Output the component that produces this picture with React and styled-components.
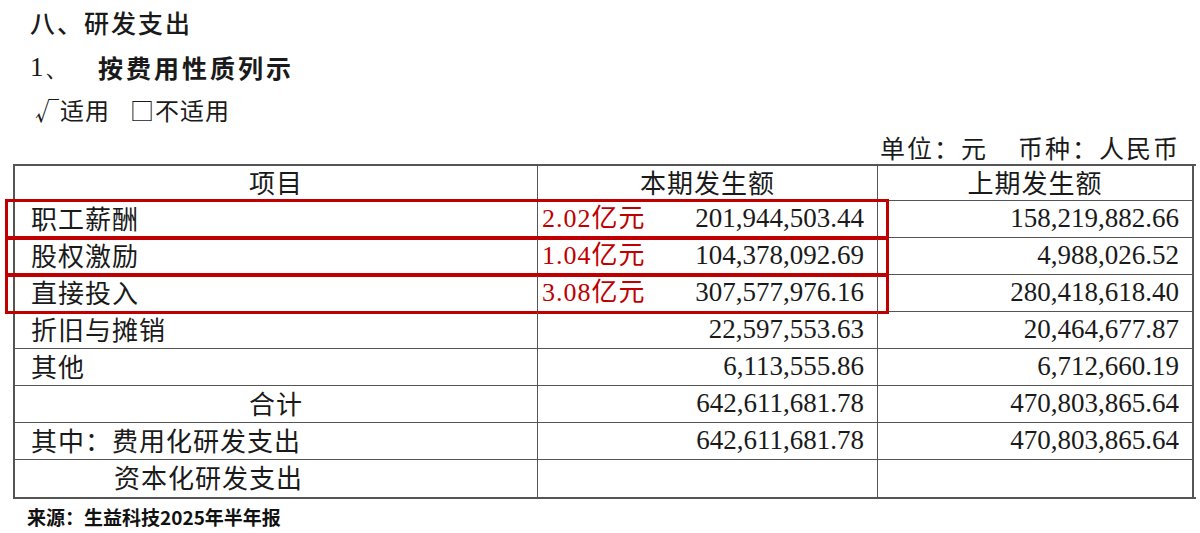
import styled, { createGlobalStyle } from "styled-components";

const GlobalStyle = createGlobalStyle`
  body {
    margin: 0;
    background: #fff;
    color: #1a1a1a;
    font-family: "Noto Sans CJK SC", sans-serif;
  }
`;

const Page = styled.main`
  width: 1200px;
  height: 533px;
  overflow: hidden;
  box-sizing: border-box;
  padding-left: 13px;
`;

const Title = styled.h2`
  margin: 0;
  height: 44px;
  line-height: 44px;
  padding-left: 17px;
  font-size: 25px;
  font-weight: 500;
  letter-spacing: 2px;
`;

const SubTitle = styled.h3`
  margin: 0;
  height: 46px;
  line-height: 46px;
  padding-left: 17px;
  font-size: 25px;
  font-weight: 600;
  letter-spacing: 3px;
  display: flex;
  .num {
    font-family: "Liberation Serif", serif;
    font-size: 27px;
    font-weight: 400;
    letter-spacing: 0;
    width: 68px;
  }
`;

const Applicable = styled.p`
  margin: 0;
  height: 40px;
  line-height: 40px;
  padding-left: 22px;
  font-size: 24px;
  display: flex;
  gap: 20px;
  span {
    letter-spacing: 1px;
  }
`;

const Unit = styled.p`
  margin: 0;
  height: 34px;
  line-height: 34px;
  padding-right: 20px;
  font-size: 25px;
  letter-spacing: 2px;
  display: flex;
  justify-content: flex-end;
  gap: 30px;
`;

const Table = styled.div`
  width: 1183px;
  border: 2px solid #555;
  border-right: none;
  box-sizing: border-box;
`;

const Row = styled.div`
  position: relative;
  display: grid;
  grid-template-columns: 523px 340px 316px;
  grid-template-rows: ${(p) => (p.$head ? "35px" : "37px")};

  ${(p) =>
    p.$mark &&
    `
    &::after {
      content: "";
      position: absolute;
      left: -10px;
      top: -2px;
      bottom: -2px;
      width: 884px;
      border: 3px solid #c00000;
      box-sizing: border-box;
      pointer-events: none;
    }
  `}
`;

const Cell = styled.div`
  display: flex;
  align-items: center;
  min-height: 0;
  box-sizing: border-box;
  border-right: ${(p) => (p.$edge ? "2px" : "1px")} solid #555;
  border-bottom: ${(p) => (p.$last ? "none" : "1px solid #555")};
  font-size: 26px;
  line-height: 1.2;
  letter-spacing: 1px;
  justify-content: ${(p) =>
    p.$align === "center" ? "center" : p.$align === "right" ? "flex-end" : "flex-start"};
  padding: ${(p) => (p.$align === "right" ? "0 13px 1px 4px" : "0 0 3px 16px")};
  ${(p) => p.$indent && "padding-left: 99px;"}
  ${(p) => p.$align === "center" && "padding: 0 0 3px;"}
`;

const Amount = styled.span`
  font-family: "Liberation Serif", serif;
  font-size: 27px;
  letter-spacing: 0;
`;

const Note = styled.span`
  margin-right: auto;
  color: #c00000;
  font-family: "Liberation Serif", "Noto Sans CJK SC", serif;
  font-size: 26px;
  letter-spacing: 1px;
`;

const Source = styled.p`
  margin: 6px 0 0;
  padding-left: 14px;
  font-size: 19px;
  font-weight: 700;
  line-height: 24px;
  color: #111;
`;

const rows = [
  { name: "职工薪酬", cur: "201,944,503.44", prev: "158,219,882.66", note: "2.02亿元" },
  { name: "股权激励", cur: "104,378,092.69", prev: "4,988,026.52", note: "1.04亿元" },
  { name: "直接投入", cur: "307,577,976.16", prev: "280,418,618.40", note: "3.08亿元" },
  { name: "折旧与摊销", cur: "22,597,553.63", prev: "20,464,677.87" },
  { name: "其他", cur: "6,113,555.86", prev: "6,712,660.19" },
  { name: "合计", cur: "642,611,681.78", prev: "470,803,865.64", center: true },
  { name: "其中：费用化研发支出", cur: "642,611,681.78", prev: "470,803,865.64" },
  { name: "资本化研发支出", cur: "", prev: "", indent: true },
];

export default function App() {
  return (
    <Page>
      <GlobalStyle />
      <Title>八、研发支出</Title>
      <SubTitle>
        <span className="num">1、</span>
        <span>按费用性质列示</span>
      </SubTitle>
      <Applicable>
        <span>√适用</span>
        <span>□不适用</span>
      </Applicable>
      <Unit>
        <span>单位：元</span>
        <span>币种：人民币</span>
      </Unit>
      <Table>
        <Row $head>
          <Cell $align="center">项目</Cell>
          <Cell $align="center">本期发生额</Cell>
          <Cell $align="center" $edge>上期发生额</Cell>
        </Row>
        {rows.map((r, i) => {
          const last = i === rows.length - 1;
          return (
            <Row key={r.name} $mark={!!r.note}>
              <Cell $align={r.center ? "center" : "left"} $indent={r.indent} $last={last}>
                {r.name}
              </Cell>
              <Cell $align="right" $last={last}>
                {r.note && <Note>{r.note}</Note>}
                <Amount>{r.cur}</Amount>
              </Cell>
              <Cell $align="right" $edge $last={last}>
                <Amount>{r.prev}</Amount>
              </Cell>
            </Row>
          );
        })}
      </Table>
      <Source>来源：生益科技2025年半年报</Source>
    </Page>
  );
}
